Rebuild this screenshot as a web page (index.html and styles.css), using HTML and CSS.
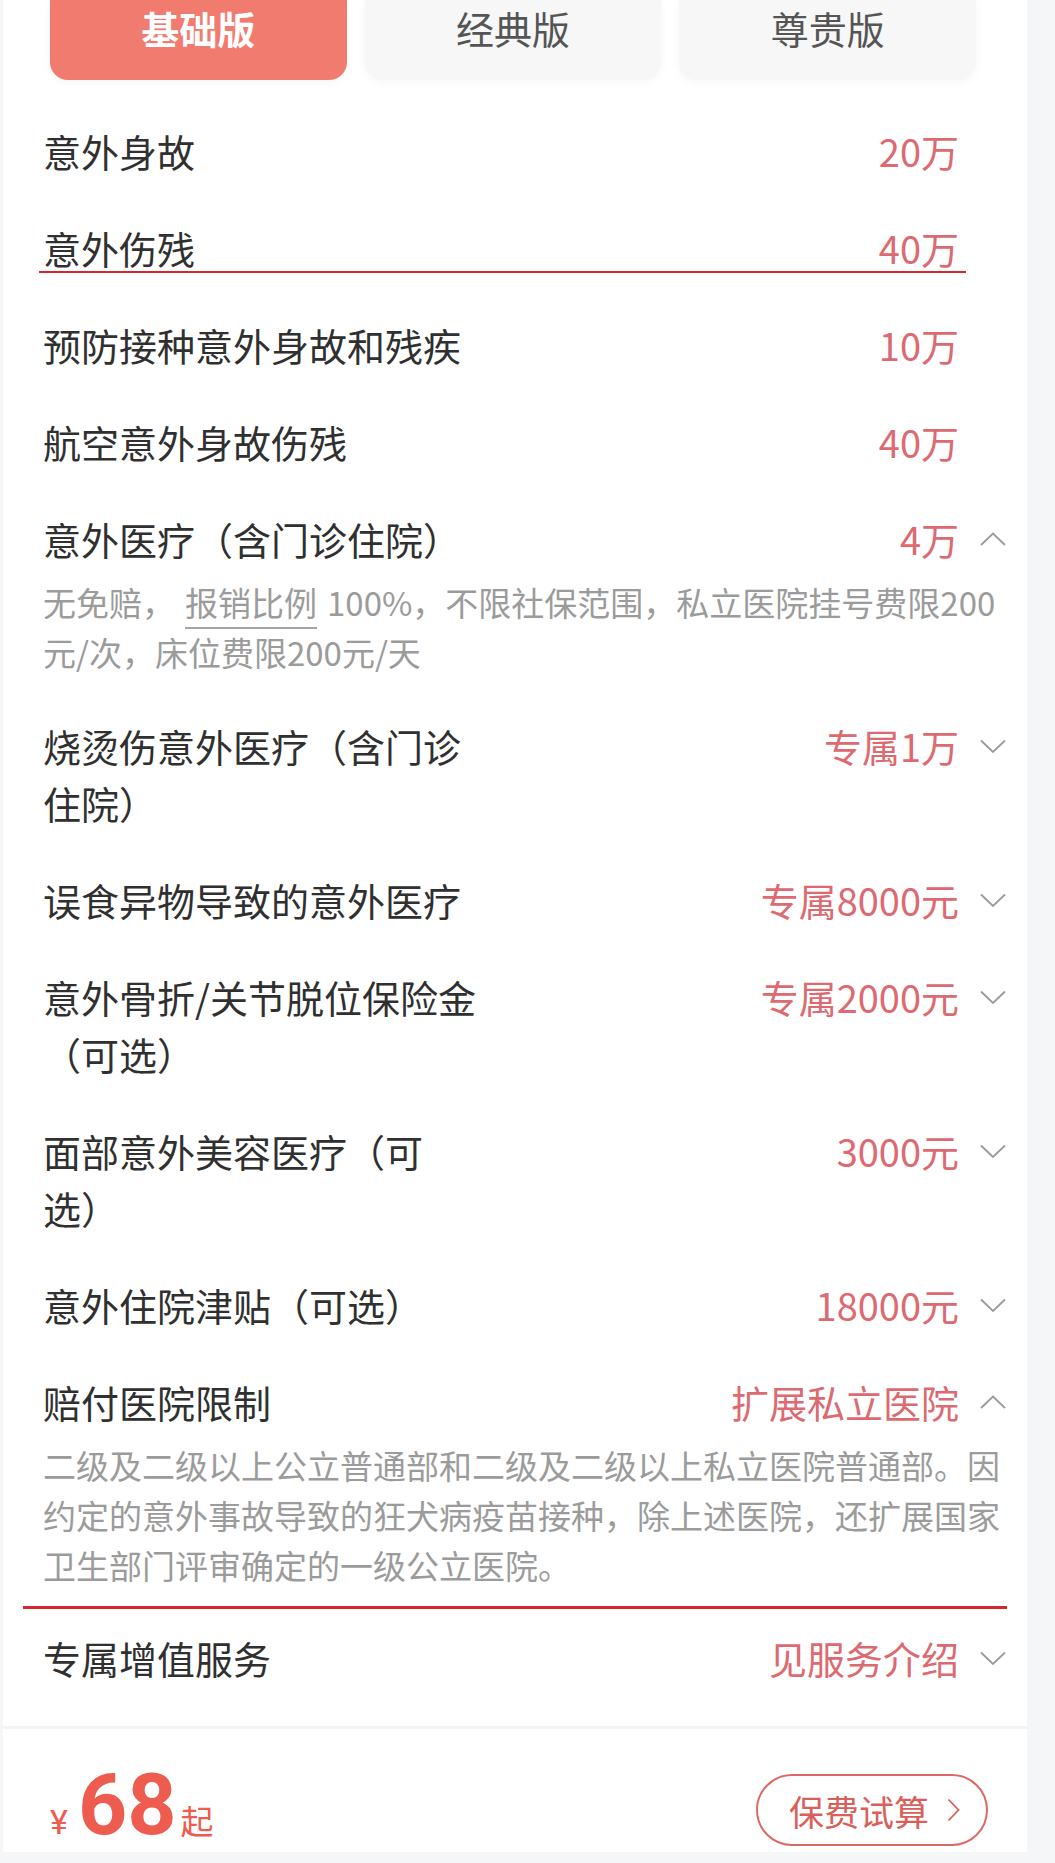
FILE: index.html
```html
<!DOCTYPE html>
<html lang="zh-CN">
<head>
    <meta charset="UTF-8">
    <meta name="viewport" content="width=device-width, initial-scale=1.0">
    <title>意外险 - 保障方案</title>
    <link rel="stylesheet" href="styles.css">
</head>
<body>

<div class="card">
    <div class="tabs">
        <div class="tab active">基础版</div>
        <div class="tab">经典版</div>
        <div class="tab">尊贵版</div>
    </div>

    <div class="list">
        <div class="row">
            <div class="row-head">
                <div class="label">意外身故</div>
                <div class="value">20万</div>
                <span class="arrow"></span>
            </div>
        </div>
        <div class="row">
            <div class="row-head">
                <div class="label">意外伤残</div>
                <div class="value">40万</div>
                <span class="arrow"></span>
            </div>
            <div class="mark"></div>
        </div>
        <div class="row">
            <div class="row-head">
                <div class="label">预防接种意外身故和残疾</div>
                <div class="value">10万</div>
                <span class="arrow"></span>
            </div>
        </div>
        <div class="row">
            <div class="row-head">
                <div class="label">航空意外身故伤残</div>
                <div class="value">40万</div>
                <span class="arrow"></span>
            </div>
        </div>
        <div class="row">
            <div class="row-head">
                <div class="label">意外医疗（含门诊住院）</div>
                <div class="value">4万</div>
                <span class="arrow"><svg width="26" height="14" viewBox="0 0 26 14"><polyline points="1,13 13,1.5 25,13"/></svg></span>
            </div>
            <div class="desc"><span>无免赔，</span><span class="term">报销比例</span><span>100%，不限社保范围，私立医院挂号费限200</span><span>元/次，床位费限200元/天</span></div>
        </div>
        <div class="row">
            <div class="row-head">
                <div class="label">烧烫伤意外医疗（含门诊住院）</div>
                <div class="value">专属1万</div>
                <span class="arrow"><svg width="26" height="14" viewBox="0 0 26 14"><polyline points="1,1.5 13,13 25,1.5"/></svg></span>
            </div>
        </div>
        <div class="row">
            <div class="row-head">
                <div class="label">误食异物导致的意外医疗</div>
                <div class="value">专属8000元</div>
                <span class="arrow"><svg width="26" height="14" viewBox="0 0 26 14"><polyline points="1,1.5 13,13 25,1.5"/></svg></span>
            </div>
        </div>
        <div class="row">
            <div class="row-head">
                <div class="label">意外骨折/关节脱位保险金（可选）</div>
                <div class="value">专属2000元</div>
                <span class="arrow"><svg width="26" height="14" viewBox="0 0 26 14"><polyline points="1,1.5 13,13 25,1.5"/></svg></span>
            </div>
        </div>
        <div class="row">
            <div class="row-head">
                <div class="label">面部意外美容医疗（可选）</div>
                <div class="value">3000元</div>
                <span class="arrow"><svg width="26" height="14" viewBox="0 0 26 14"><polyline points="1,1.5 13,13 25,1.5"/></svg></span>
            </div>
        </div>
        <div class="row">
            <div class="row-head">
                <div class="label">意外住院津贴（可选）</div>
                <div class="value">18000元</div>
                <span class="arrow"><svg width="26" height="14" viewBox="0 0 26 14"><polyline points="1,1.5 13,13 25,1.5"/></svg></span>
            </div>
        </div>
        <div class="row row-last-open">
            <div class="row-head">
                <div class="label">赔付医院限制</div>
                <div class="value">扩展私立医院</div>
                <span class="arrow"><svg width="26" height="14" viewBox="0 0 26 14"><polyline points="1,13 13,1.5 25,13"/></svg></span>
            </div>
            <div class="desc">二级及二级以上公立普通部和二级及二级以上私立医院普通部。因约定的意外事故导致的狂犬病疫苗接种，除上述医院，还扩展国家卫生部门评审确定的一级公立医院。</div>
        </div>
        <div class="mark-line"></div>
        <div class="row">
            <div class="row-head">
                <div class="label">专属增值服务</div>
                <div class="value">见服务介绍</div>
                <span class="arrow"><svg width="26" height="14" viewBox="0 0 26 14"><polyline points="1,1.5 13,13 25,1.5"/></svg></span>
            </div>
        </div>
    </div>

    <div class="footer">
        <div class="price"><span class="yen">¥</span><span class="num">68</span><span class="qi">起</span></div>
        <div class="calc-btn">
            <span>保费试算</span>
            <svg width="13" height="24" viewBox="0 0 13 24"><polyline points="1.5,1.5 11.5,12 1.5,22.5"/></svg>
        </div>
    </div>
</div>

</body>
</html>
```

FILE: styles.css
```css
body {
    margin: 0;
    background: #f5f6f8;
    font-family: "Noto Sans CJK SC", sans-serif;
    color: #303030;
    text-autospace: no-autospace;
}
.card {
    width: 1024px;
    margin-left: 3px;
    background: #fff;
}

/* version tabs */
.tabs {
    display: grid;
    grid-template-columns: repeat(3, 1fr);
    gap: 18px;
    padding: 0 51px 0 47px;
}
.tab {
    height: 80px;
    line-height: 56px;
    text-align: center;
    font-size: 38px;
    color: #555;
    background: #f7f7f7;
    border-radius: 0 0 18px 18px;
    box-shadow: 0 2px 10px rgba(0, 0, 0, 0.04);
}
.tab.active {
    background: #f27b70;
    color: #fff;
    font-weight: bold;
}

/* coverage list */
.list {
    padding: 22px 21px 20px 40px;
}
.row {
    position: relative;
    padding: 20px 0;
}
.row-last-open {
    padding-bottom: 16px;
}
.row-head {
    display: flex;
    align-items: flex-start;
    font-size: 38px;
    line-height: 57px;
}
.label {
    max-width: 440px;
    color: #303030;
    text-spacing-trim: space-all;
}
.value {
    margin-left: auto;
    white-space: nowrap;
    color: #dc6a70;
}
.arrow {
    display: flex;
    align-items: center;
    flex: 0 0 26px;
    height: 57px;
    margin-left: 21px;
}
.arrow polyline,
.calc-btn polyline {
    fill: none;
    stroke-width: 1.8;
}
.arrow polyline {
    stroke: #9a9a9a;
}
.desc {
    margin-top: 10px;
    font-size: 33px;
    line-height: 50px;
    color: #9b9b9b;
}
.term {
    margin: 0 10px;
    text-decoration: underline;
    text-decoration-color: #a5a5a5;
    text-decoration-thickness: 2px;
    text-underline-offset: 11px;
}

/* red marks */
.mark {
    position: absolute;
    left: -4px;
    top: 72px;
    width: 927px;
    height: 2px;
    background: #d8262e;
}
.mark-line {
    height: 3px;
    margin: 0 -1px 0 -20px;
    background: #d8262e;
}

/* bottom bar */
.footer {
    display: flex;
    align-items: flex-end;
    justify-content: space-between;
    border-top: 3px solid #f2f3f5;
    padding: 35px 39px 6px 47px;
}
.price {
    font-family: Roboto, sans-serif;
    font-size: 86px;
    line-height: 82px;
    font-weight: bold;
    color: #ee5b4f;
}
.yen {
    font-size: 34px;
    font-weight: normal;
    line-height: 1;
    margin-right: 10px;
}
.qi {
    font-family: "Noto Sans CJK SC", sans-serif;
    font-size: 33px;
    font-weight: normal;
    line-height: 1;
    margin-left: 4px;
}
.calc-btn {
    display: flex;
    align-items: center;
    gap: 18px;
    box-sizing: border-box;
    height: 72px;
    padding: 0 26px 0 31px;
    border: 2px solid #dc6a64;
    border-radius: 36px;
    font-size: 35px;
    color: #d9605a;
}
.calc-btn polyline {
    stroke: #d9605a;
}
```
